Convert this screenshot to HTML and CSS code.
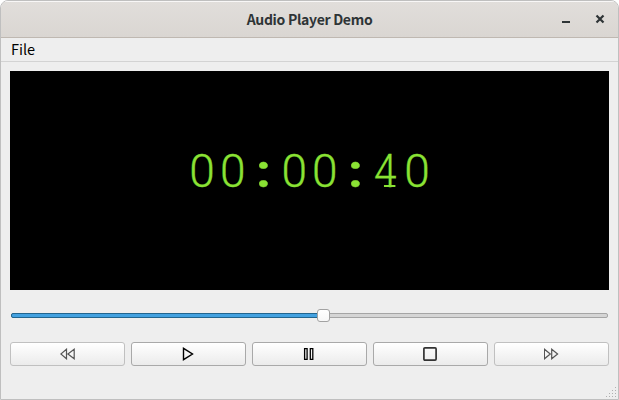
FILE: index.html
```html
<!DOCTYPE html>
<html lang="en">
<head>
<meta charset="utf-8">
<title>Audio Player Demo</title>
<link rel="stylesheet" href="styles.css">
</head>
<body>
<div class="window">
  <header class="titlebar">
    <h1 class="title">Audio Player Demo</h1>
    <div class="controls">
      <svg width="10" height="10" viewBox="0 0 10 10"><path d="M1 7h8v2H1z" fill="#2e3436"/></svg>
      <svg width="10" height="10" viewBox="0 0 10 10"><path d="M1.5 1.5l7 7M8.5 1.5l-7 7" stroke="#2e3436" stroke-width="2.2"/></svg>
    </div>
  </header>
  <nav class="menubar"><span class="menu">File</span></nav>
  <main class="content">
    <div class="display">
      <div class="time"><span>0</span><span>0</span><span class="colon">:</span><span>0</span><span>0</span><span class="colon">:</span><span class="four">4</span><span>0</span></div>
    </div>
    <div class="slider">
      <div class="groove"><div class="fill"></div></div>
      <div class="handle"></div>
    </div>
    <div class="buttons">
      <button class="button disabled" aria-label="Rewind"><svg width="15" height="12" viewBox="0 0 15 12"><path d="M6.5 1.2v9.6L.8 6zM14.2 1.2v9.6L7.9 6z" fill="none" stroke="#555" stroke-width="1.2"/></svg></button>
      <button class="button" aria-label="Play"><svg width="15" height="14" viewBox="0 0 15 14"><path d="M2.5 1.3v11.4L11.5 7z" fill="none" stroke="#000" stroke-width="1.4"/></svg></button>
      <button class="button" aria-label="Pause"><svg width="15" height="14" viewBox="0 0 15 14"><path d="M2.6 1.6h2.5v10.8H2.6zM8.3 1.6h2.5v10.8H8.3z" fill="none" stroke="#000" stroke-width="1.3"/></svg></button>
      <button class="button" aria-label="Stop"><svg width="15" height="14" viewBox="0 0 15 14"><rect x=".9" y=".9" width="12.2" height="12.2" rx="1" fill="none" stroke="#333" stroke-width="1.7"/></svg></button>
      <button class="button disabled" aria-label="Forward"><svg width="15" height="12" viewBox="0 0 15 12"><path d="M.4 1.2v9.6L6.3 6zM7.7 1.2v9.6L13.6 6z" fill="none" stroke="#555" stroke-width="1.2"/></svg></button>
    </div>
  </main>
  <svg class="grip" width="11" height="11" viewBox="0 0 11 11"><path d="M9 0h1v1H9zM6 3h1v1H6zM9 3h1v1H9zM3 6h1v1H3zM6 6h1v1H6zM9 6h1v1H9zM0 9h1v1H0zM3 9h1v1H3zM6 9h1v1H6zM9 9h1v1H9z" fill="#b0b0b0"/></svg>
</div>
</body>
</html>
```
FILE: styles.css
```css
* { box-sizing: border-box; }
body { margin: 0; background: #fff; font-family: "Noto Sans", sans-serif; }
.window {
  position: relative;
  width: 619px;
  height: 400px;
  border: 1px solid #bfbfbf;
  border-radius: 8px 8px 0 0;
  background: #eee;
  overflow: hidden;
}
.titlebar {
  display: grid;
  grid-template-columns: 1fr auto 1fr;
  height: 37px;
  align-items: center;
  background: linear-gradient(#e1dedb, #dad6d2);
  border-bottom: 1px solid #bfb8b1;
  box-shadow: inset 0 1px #f8f7f7;
}
.title {
  grid-column: 2;
  margin: 0;
  padding-bottom: 1px;
  font: 700 14px/20px "Noto Sans CJK SC", "Noto Sans", sans-serif;
  letter-spacing: -.3px;
  color: #2e3436;
}
.controls { display: flex; justify-content: flex-end; gap: 24px; padding-right: 13px; }
.controls svg { display: block; }
.menubar {
  height: 24px;
  padding-left: 10px;
  border-bottom: 1px solid #d3d3d3;
  font: 14.5px/21px "Noto Sans CJK SC", "Noto Sans", sans-serif;
  color: #000;
}
.content { padding: 9px; }
.display { height: 219px; background: #000; display: flex; justify-content: center; padding-top: 70px; }
.time {
  display: grid;
  grid-template-columns: repeat(8, 30.7px);
  height: 60px;
  color: #8ae234;
  font: 300 46px/60px Roboto, sans-serif;
  -webkit-text-stroke: .3px #8ae234;
  text-align: center;
}
.time span { position: relative; }
.colon { font-weight: 700; transform: scaleX(1.15); }
.four { transform: translateX(-1.2px) scaleX(.88); }
.four::after {
  content: "";
  position: absolute;
  left: 14px;
  top: 44px;
  width: 13px;
  height: 2px;
  background: #8ae234;
}
.slider { position: relative; margin: 19px 1px 0; height: 14px; padding-top: 4px; }
.groove { height: 5px; border: 1px solid #a5a5a5; border-radius: 2px; background: #d5d5d5; }
.fill { width: 312px; height: 5px; margin: -1px; border: 1px solid #22658f; border-radius: 2px; background: #43a1e0; }
.handle {
  position: absolute;
  left: 306px;
  top: 0;
  width: 13px;
  height: 13px;
  border: 1px solid #a2a2a2;
  border-radius: 3px;
  background: linear-gradient(#fff, #f7f7f7);
}
.buttons { display: grid; grid-template-columns: repeat(5, 115px); gap: 6px; margin-top: 19px; }
.button {
  display: flex;
  align-items: center;
  justify-content: center;
  height: 24px;
  padding: 0;
  border: 1px solid #a9a9a9;
  border-radius: 3px;
  background: linear-gradient(#fff, #ebebeb);
}
.button svg { display: block; }
.disabled { border-color: #c0c0c0; }
.grip { position: absolute; right: 1px; bottom: 1px; }
```
